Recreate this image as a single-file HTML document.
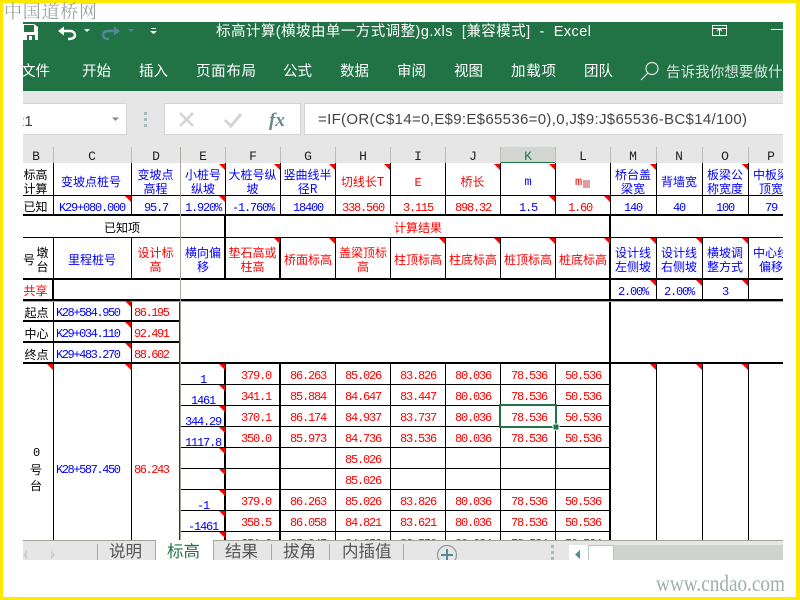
<!DOCTYPE html>
<html><head><meta charset="utf-8">
<style>
html,body{margin:0;padding:0;background:#fff}
body{width:800px;height:600px;overflow:hidden;position:relative}
svg{position:absolute;left:0;top:0}
.cj{font-family:"WenQuanYi Zen Hei","Noto Sans CJK SC",sans-serif;font-size:12px;text-anchor:middle}
.sa{font-family:"Liberation Sans","Noto Sans CJK SC",sans-serif}
.n{font-family:"Liberation Mono",monospace;font-size:12px;letter-spacing:-1.2px;text-anchor:middle}
.nl{font-family:"Liberation Mono",monospace;font-size:12px}
.b{fill:#0000ff}.r{fill:#ff0000}.k{fill:#000}
.h{font-family:"Liberation Mono",monospace;font-size:13px;text-anchor:middle;fill:#222}
.t{font-family:"Liberation Sans","Noto Sans CJK SC",sans-serif;font-size:14.5px;fill:#fff}
.tab{font-family:"Liberation Sans","Noto Sans CJK SC",sans-serif;font-size:16.5px;fill:#555}
</style></head><body>
<svg width="800" height="600" viewBox="0 0 800 600" xmlns="http://www.w3.org/2000/svg">
<defs>
<clipPath id="app"><rect x="23" y="22" width="760" height="538"/></clipPath>
<clipPath id="sheet"><rect x="23" y="163" width="760" height="377"/></clipPath>
<clipPath id="bot"><rect x="23" y="540" width="760" height="20"/></clipPath>
</defs>
<rect width="800" height="600" fill="#ffe800"/>
<rect x="3" y="3" width="793" height="594" fill="#fff"/>
<text x="4" y="18" font-family="Liberation Serif,Noto Serif CJK SC,serif" font-size="18" fill="#9aa3a0" textLength="93">中国道桥网</text>
<text x="656" y="591" font-family="Liberation Serif,serif" font-size="23" fill="#9fb0ac" textLength="129" lengthAdjust="spacingAndGlyphs">www.cndao.com</text>

<g clip-path="url(#app)">
<rect x="23" y="22" width="760" height="69" fill="#217346"/>
<rect x="23" y="91" width="760" height="56" fill="#e6e6e6"/>
<!-- save -->
<path d="M20 24H34L38 27V40H20Z" fill="#fff"/>
<rect x="24" y="25" width="10" height="7" fill="#217346"/>
<rect x="27" y="35" width="8" height="5" fill="#217346"/><rect x="29" y="36" width="3" height="4" fill="#fff"/>
<!-- undo -->
<path d="M60 31H70C74 31 75 34 75 35C75 38 72 39 68 39" fill="none" stroke="#fff" stroke-width="2.4"/>
<path d="M58 31L64 26.5V35.5Z" fill="#fff"/>
<path d="M84 29H90L87 32Z" fill="#fff"/>
<path d="M118 31H108C104 31 103 34 103 35C103 38 106 39 109 39" fill="none" stroke="#53889a" stroke-width="2.4"/>
<path d="M120 31L114 26.5V35.5Z" fill="#53889a"/>
<path d="M128 29H134L131 32Z" fill="#53889a"/>
<rect x="151" y="28" width="5" height="1" fill="#fff"/><path d="M150 31H157L153.500 34Z" fill="#fff"/>
<text x="216" y="36" class="t" xml:space="preserve" textLength="375">标高计算(横坡由单一方式调整)g.xls  [兼容模式]  -  Excel</text>
<rect x="712.500" y="25.500" width="14" height="10" fill="none" stroke="#fff"/><path d="M719.500 35V29M717 31L719.500 28.500L722 31M712 28.500H727" fill="none" stroke="#fff"/>
<rect x="771" y="29" width="13" height="1" fill="#fff"/>
<text x="21" y="76" class="t">文件</text><text x="82" y="76" class="t">开始</text><text x="139" y="76" class="t">插入</text><text x="196" y="76" class="t" textLength="60">页面布局</text><text x="283" y="76" class="t">公式</text><text x="340" y="76" class="t">数据</text><text x="397" y="76" class="t">审阅</text><text x="454" y="76" class="t">视图</text><text x="511" y="76" class="t" textLength="45">加载项</text><text x="584" y="76" class="t">团队</text>
<circle cx="652" cy="68.500" r="6" fill="none" stroke="#dfe9e3" stroke-width="1.200"/><path d="M648 73L641 80" stroke="#dfe9e3" stroke-width="1.200"/>
<text x="666" y="77" class="t" fill-opacity=".82" textLength="131">告诉我你想要做什么</text>

<!-- formula bar -->
<rect x="17.500" y="103.500" width="109" height="31" fill="#fff" stroke="#d4d4d4"/>
<text x="6" y="126" class="sa" font-size="15" fill="#444">A21</text>
<path d="M112 117.500H119L115.500 121Z" fill="#888"/>
<rect x="144" y="112" width="3" height="3" fill="#a4bcbc"/><rect x="144" y="118" width="3" height="3" fill="#a4bcbc"/><rect x="144" y="124" width="3" height="3" fill="#a4bcbc"/>
<rect x="164.500" y="103.500" width="136" height="31" fill="#fff" stroke="#d4d4d4"/>
<path d="M180 113L193 126M193 113L180 126" stroke="#d4d4d4" stroke-width="2.500"/>
<path d="M225 120L231 126L241 114" fill="none" stroke="#d4d4d4" stroke-width="3"/>
<text x="269" y="126" font-family="Liberation Serif,serif" font-style="italic" font-weight="bold" font-size="19" fill="#6a8a8a">fx</text>
<rect x="304.500" y="103.500" width="490" height="31" fill="#fff" stroke="#d4d4d4"/>
<text x="318" y="124" class="sa" font-size="15" fill="#444" textLength="429">=IF(OR(C$14=0,E$9:E$65536=0),0,J$9:J$65536-BC$14/100)</text>

<!-- col headers -->
<rect x="23" y="147" width="760" height="16" fill="#e6e6e6"/>
<rect x="500" y="147" width="55" height="16" fill="#d2d5d2"/>
<rect x="500" y="162" width="55" height="2" fill="#217346"/>
<path d="M53.500 147V163M131.500 147V163M225.500 147V163M280.500 147V163M335.500 147V163M390.500 147V163M445.500 147V163M500.500 147V163M555.500 147V163M610.500 147V163M656.500 147V163M702.500 147V163M748.500 147V163" stroke="#bcbcb4"/>
<path d="M180.500 147V163" stroke="#a8a89c"/>
<text x="36" y="160" class="h">B</text><text x="92" y="160" class="h">C</text><text x="156" y="160" class="h">D</text><text x="203" y="160" class="h">E</text><text x="253" y="160" class="h">F</text><text x="308" y="160" class="h">G</text><text x="363" y="160" class="h">H</text><text x="418" y="160" class="h">I</text><text x="473" y="160" class="h">J</text><text x="528" y="160" class="h" style="fill:#217346">K</text><text x="583" y="160" class="h">L</text><text x="633" y="160" class="h">M</text><text x="679" y="160" class="h">N</text><text x="725" y="160" class="h">O</text><text x="771" y="160" class="h">P</text>
</g>

<g clip-path="url(#sheet)">
<rect x="23" y="163" width="760" height="377" fill="#fff"/>
<!-- thin verticals -->
<path stroke="#000" fill="none" d="M53.500 163V215M131.500 163V215M225.500 163V215M280.500 163V215M335.500 163V215M390.500 163V215M445.500 163V215M500.500 163V215M555.500 163V215M610.500 163V215M656.500 163V215M702.500 163V215M748.500 163V215
M53.500 237V279M131.500 237V279M335.500 237V279M390.500 237V279M445.500 237V279M500.500 237V279M555.500 237V279M656.500 237V300M702.500 237V300M748.500 237V300
M53.500 300V540M131.500 300V540M335.500 363V540M390.500 363V540M445.500 363V540M500.500 363V540M555.500 363V540M656.500 363V540M702.500 363V540M748.500 363V540"/>
<!-- thin horizontals -->
<path stroke="#000" fill="none" d="M23 195.500H783M23 237.500H783M180 384.500H610M180 405.500H610M180 426.500H610M180 447.500H610M180 468.500H610M180 489.500H610M180 510.500H610M180 531.500H610"/>
<!-- thick -->
<path stroke="#000" stroke-width="2" fill="none" d="M23 215H783M23 279H783M23 300H783M23 321H180M23 342H180M23 363H783M225 215V279M280 237V279M53 279V300M610 215V540M225 363V540M280 363V540"/>
<!-- freeze -->
<path stroke="#a8a89c" fill="none" d="M180.500 163V301M23 301.500H783"/>
<rect x="179" y="302" width="2" height="238" fill="#333"/>
<rect x="180" y="302" width="1" height="238" fill="#a8a89c"/>

<!-- triangles -->
<path fill="#f00" d="M219 164H225V170ZM274 164H280V170ZM329 164H335V170ZM384 164H390V170ZM494 164H500V170ZM549 164H555V170ZM650 164H656V170ZM742 164H748V170Z
M125 196H131V202ZM219 196H225V202ZM549 196H555V202ZM604 196H610V202Z
M274 238H280V244ZM329 238H335V244ZM439 238H445V244ZM494 238H500V244ZM549 238H555V244ZM604 238H610V244ZM650 238H656V244ZM696 238H702V244ZM742 238H748V244Z
M650 280H656V286ZM696 280H702V286ZM742 280H748V286Z
M125 301H131V307ZM125 322H131V328ZM125 343H131V349ZM47 364H53V370ZM125 364H131V370ZM219 364H225V370ZM219 385H225V391ZM219 406H225V412ZM219 427H225V433ZM219 448H225V454ZM219 469H225V475ZM219 490H225V496ZM219 511H225V517ZM219 532H225V538ZM650 364H656V370ZM696 364H702V370ZM742 364H748V370Z"/>

<!-- row 1 -->
<text x="35.500" y="179" class="cj k">标高</text><text x="35.500" y="193" class="cj k">计算</text>
<text x="91" y="186" class="cj b">变坡点桩号</text>
<text x="155.500" y="179" class="cj b">变坡点</text><text x="155.500" y="193" class="cj b">高程</text>
<text x="203" y="179" class="cj b">小桩号</text><text x="203" y="193" class="cj b">纵坡</text>
<text x="252.500" y="179" class="cj b">大桩号纵</text><text x="252.500" y="193" class="cj b">坡</text>
<text x="307.500" y="179" class="cj b">竖曲线半</text><text x="307.500" y="193" class="cj b">径R</text>
<text x="362.500" y="186" class="cj r">切线长T</text>
<text x="417.500" y="186" class="n r">E</text>
<text x="472.500" y="186" class="cj r">桥长</text>
<text x="527.500" y="185" class="n b">m</text>
<text x="578" y="185" class="n r">m</text><rect x="583" y="180" width="7" height="8" fill="#d8a0a0"/>
<text x="633" y="179" class="cj b">桥台盖</text><text x="633" y="193" class="cj b">梁宽</text>
<text x="679" y="186" class="cj b">背墙宽</text>
<text x="725" y="179" class="cj b">板梁公</text><text x="725" y="193" class="cj b">称宽度</text>
<text x="771" y="179" class="cj b">中板梁</text><text x="771" y="193" class="cj b">顶宽</text>
<!-- row 2 -->
<text x="35.500" y="211" class="cj k">已知</text>
<text x="92" y="211" class="n b">K29+080.000</text><text x="156" y="211" class="n b">95.7</text><text x="203" y="211" class="n b">1.920%</text><text x="253" y="211" class="n b">-1.760%</text><text x="308" y="211" class="n b">18400</text><text x="363" y="211" class="n r">338.560</text><text x="418" y="211" class="n r">3.115</text><text x="473" y="211" class="n r">898.32</text><text x="528" y="211" class="n b">1.5</text><text x="580" y="211" class="n r">1.60</text><text x="633" y="211" class="n b">140</text><text x="679" y="211" class="n b">40</text><text x="725" y="211" class="n b">100</text><text x="771" y="211" class="n b">79</text>
<!-- row 3 -->
<text x="122" y="232" class="cj k">已知项</text><text x="418" y="232" class="cj r">计算结果</text>
<!-- row 4 -->
<text x="29" y="264" class="cj k">号</text><text x="42.500" y="257" class="cj k">墩</text><text x="42.500" y="271" class="cj k">台</text>
<text x="92" y="264" class="cj b">里程桩号</text>
<text x="155.500" y="257" class="cj r">设计标</text><text x="155.500" y="271" class="cj r">高</text>
<text x="203" y="257" class="cj b">横向偏</text><text x="203" y="271" class="cj b">移</text>
<text x="252.500" y="257" class="cj r">垫石高或</text><text x="252.500" y="271" class="cj r">柱高</text>
<text x="308" y="264" class="cj r">桥面标高</text>
<text x="363" y="257" class="cj r">盖梁顶标</text><text x="363" y="271" class="cj r">高</text>
<text x="418" y="264" class="cj r">柱顶标高</text><text x="473" y="264" class="cj r">柱底标高</text><text x="528" y="264" class="cj r">桩顶标高</text><text x="583" y="264" class="cj r">桩底标高</text>
<text x="633" y="257" class="cj b">设计线</text><text x="633" y="271" class="cj b">左侧坡</text>
<text x="679" y="257" class="cj b">设计线</text><text x="679" y="271" class="cj b">右侧坡</text>
<text x="725" y="257" class="cj b">横坡调</text><text x="725" y="271" class="cj b">整方式</text>
<text x="771" y="257" class="cj b">中心线</text><text x="771" y="271" class="cj b">偏移</text>
<!-- row 5 -->
<text x="35.500" y="295" class="cj r">共享</text>
<text x="633" y="295" class="n b">2.00%</text><text x="679" y="295" class="n b">2.00%</text><text x="725" y="295" class="n b">3</text>
<!-- 起点 -->
<text x="36.500" y="317" class="cj k">起点</text><text x="56" y="316" class="nl b" textLength="65">K28+584.950</text><text x="134" y="316" class="nl r" textLength="36">86.195</text>
<text x="36.500" y="338" class="cj k">中心</text><text x="56" y="337" class="nl b" textLength="65">K29+034.110</text><text x="134" y="337" class="nl r" textLength="36">92.491</text>
<text x="36.500" y="359" class="cj k">终点</text><text x="56" y="358" class="nl b" textLength="65">K29+483.270</text><text x="134" y="358" class="nl r" textLength="36">88.602</text>
<!-- big left -->
<text x="36" y="456" class="n k">0</text><text x="36" y="474" class="cj k">号</text><text x="36" y="490" class="cj k">台</text>
<text x="56" y="473" class="nl b" textLength="65">K28+587.450</text><text x="134" y="473" class="nl r" textLength="36">86.243</text>

<!-- E column -->
<text x="203" y="383" class="n b">1</text><text x="203" y="404" class="n b">1461</text><text x="203" y="425" class="n b">344.29</text><text x="203" y="446" class="n b">1117.8</text><text x="203" y="509" class="n b">-1</text><text x="203" y="530" class="n b">-1461</text>
<!-- data -->
<text x="256" y="379" class="n r">379.0</text><text x="308" y="379" class="n r">86.263</text><text x="363" y="379" class="n r">85.026</text><text x="418" y="379" class="n r">83.826</text><text x="473" y="379" class="n r">80.036</text><text x="529" y="379" class="n r">78.536</text><text x="583" y="379" class="n r">50.536</text>
<text x="256" y="400" class="n r">341.1</text><text x="308" y="400" class="n r">85.884</text><text x="363" y="400" class="n r">84.647</text><text x="418" y="400" class="n r">83.447</text><text x="473" y="400" class="n r">80.036</text><text x="529" y="400" class="n r">78.536</text><text x="583" y="400" class="n r">50.536</text>
<text x="256" y="421" class="n r">370.1</text><text x="308" y="421" class="n r">86.174</text><text x="363" y="421" class="n r">84.937</text><text x="418" y="421" class="n r">83.737</text><text x="473" y="421" class="n r">80.036</text><text x="529" y="421" class="n r">78.536</text><text x="583" y="421" class="n r">50.536</text>
<text x="256" y="442" class="n r">350.0</text><text x="308" y="442" class="n r">85.973</text><text x="363" y="442" class="n r">84.736</text><text x="418" y="442" class="n r">83.536</text><text x="473" y="442" class="n r">80.036</text><text x="529" y="442" class="n r">78.536</text><text x="583" y="442" class="n r">50.536</text>
<text x="363" y="463" class="n r">85.026</text><text x="363" y="484" class="n r">85.026</text>
<text x="256" y="505" class="n r">379.0</text><text x="308" y="505" class="n r">86.263</text><text x="363" y="505" class="n r">85.026</text><text x="418" y="505" class="n r">83.826</text><text x="473" y="505" class="n r">80.036</text><text x="529" y="505" class="n r">78.536</text><text x="583" y="505" class="n r">50.536</text>
<text x="256" y="526" class="n r">358.5</text><text x="308" y="526" class="n r">86.058</text><text x="363" y="526" class="n r">84.821</text><text x="418" y="526" class="n r">83.621</text><text x="473" y="526" class="n r">80.036</text><text x="529" y="526" class="n r">78.536</text><text x="583" y="526" class="n r">50.536</text>
<text x="256" y="547" class="n r">351.0</text><text x="308" y="547" class="n r">85.947</text><text x="363" y="547" class="n r">84.650</text><text x="418" y="547" class="n r">83.550</text><text x="473" y="547" class="n r">80.034</text><text x="529" y="547" class="n r">78.534</text><text x="583" y="547" class="n r">50.534</text>
<!-- selection -->
<rect x="500" y="405" width="56" height="22" fill="none" stroke="#217346" stroke-width="2"/>
<rect x="553" y="424" width="6" height="6" fill="#217346" stroke="#fff" stroke-width="1"/>
</g>

<!-- tab bar -->
<g clip-path="url(#bot)">
<rect x="23" y="540" width="760" height="20" fill="#e6e6e6"/>
<rect x="23" y="540" width="760" height="1" fill="#a4a49c"/>
<path d="M27 550V560L23 555ZM51 550V560L55 555Z" fill="#d0d0d0"/>
<path d="M97.500 544V560M155.500 541V560M213.500 541V560M271.500 544V560M329.500 544V560M403.500 544V560" stroke="#a8a8a0"/>
<rect x="156" y="540" width="57" height="20" fill="#fff"/>
<text x="109" y="557" class="tab">说明</text>
<text x="167" y="557" class="tab" style="fill:#217346">标高</text>
<text x="225" y="557" class="tab">结果</text>
<text x="283" y="557" class="tab">拔角</text>
<text x="342" y="557" class="tab">内插值</text>
<circle cx="447" cy="555" r="9.500" fill="none" stroke="#8a9a9a" stroke-width="1.200"/>
<path d="M447 549V561M441 555H453" stroke="#4f8a98" stroke-width="2"/>
<rect x="551" y="545" width="3" height="3" fill="#a4bcbc"/><rect x="551" y="551" width="3" height="3" fill="#a4bcbc"/><rect x="551" y="557" width="3" height="3" fill="#a4bcbc"/>
<rect x="569" y="545" width="214" height="15" fill="#d0d2cf"/>
<rect x="569" y="545" width="19" height="15" fill="#fff"/>
<path d="M575 554.500L580 550V559Z" fill="#5a8a98"/>
<rect x="588.500" y="545.500" width="25" height="16" fill="#fff" stroke="#b4c8c8"/>
</g>
</svg>
</body></html>
